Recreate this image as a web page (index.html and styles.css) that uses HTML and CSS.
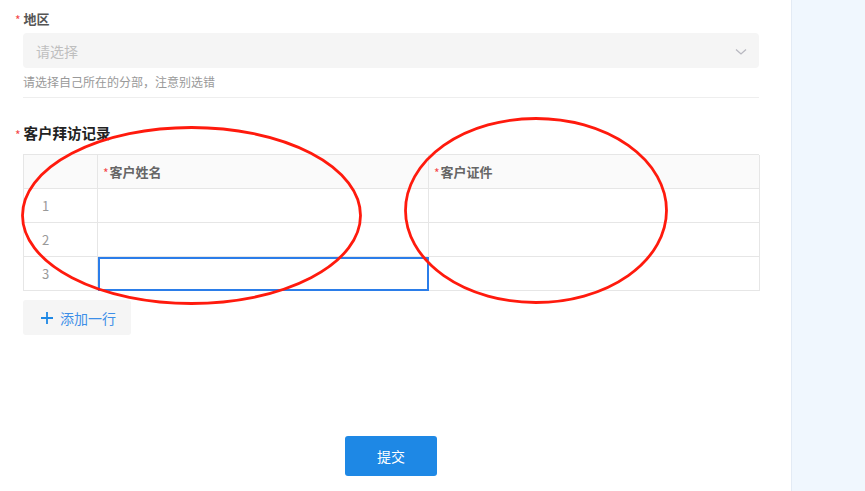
FILE: index.html
```html
<!DOCTYPE html>
<html lang="zh">
<head>
<meta charset="utf-8">
<link rel="stylesheet" href="styles.css">
</head>
<body>
<div class="page">
  <main class="main">
    <div class="field">
      <div class="label label-light"><span class="req">*</span>地区</div>
      <div class="select">
        <span class="placeholder">请选择</span>
        <svg class="chev" width="12" height="8" viewBox="0 0 12 8"><path d="M1 1.5 L6 6 L11 1.5" fill="none" stroke="#b8b8c0" stroke-width="1.3"/></svg>
      </div>
      <div class="help">请选择自己所在的分部，注意别选错</div>
    </div>
    <div class="divider"></div>
    <div class="field2">
      <div class="label label-dark"><span class="req">*</span>客户拜访记录</div>
      <div class="grid">
        <div class="cell head"></div>
        <div class="cell head"><span class="req">*</span>客户姓名</div>
        <div class="cell head"><span class="req">*</span>客户证件</div>
        <div class="cell num">1</div><div class="cell"></div><div class="cell"></div>
        <div class="cell num">2</div><div class="cell"></div><div class="cell"></div>
        <div class="cell num">3</div><div class="cell active"></div><div class="cell"></div>
      </div>
      <button class="add"><svg width="12" height="12" viewBox="0 0 12 12"><path d="M6 0 V12 M0 6 H12" stroke="#1e88e5" stroke-width="1.8"/></svg><span>添加一行</span></button>
    </div>
    <div class="actions"><button class="submit">提交</button></div>
  </main>
  <aside class="side"></aside>
  <svg class="marks" width="865" height="491" viewBox="0 0 865 491">
    <ellipse cx="191.5" cy="215.5" rx="169" ry="88" fill="none" stroke="#ff1a0d" stroke-width="2.8"/>
    <ellipse cx="536" cy="210.5" rx="130.5" ry="92" fill="none" stroke="#ff1a0d" stroke-width="2.8"/>
  </svg>
</div>
</body>
</html>
```
FILE: styles.css
```css
* { box-sizing: border-box; }
html, body { margin: 0; padding: 0; }
body {
  font-family: "Noto Sans CJK SC", "Noto Sans", sans-serif;
  background: #fff;
  width: 865px;
  height: 491px;
  overflow: hidden;
}
.page { position: relative; display: flex; height: 491px; }
.main { width: 791px; padding: 9px 32px 0 23px; }
.side { flex: 1; background: #f0f7fe; border-left: 1px solid #e3ebf5; }
.req { color: #f5484a; font-weight: normal; font-size: 12px; position: relative; left: -8px; margin-right: -5px; top: 1px; }
.label { font-weight: bold; line-height: 20px; }
.label-light { font-size: 13px; color: #555; }
.label-dark { font-size: 14.5px; color: #222; }
.select {
  margin-top: 4px;
  height: 35px;
  background: #f5f5f5;
  border-radius: 4px;
  display: flex;
  align-items: center;
  justify-content: space-between;
  padding: 0 12px 0 13px;
}
.placeholder { font-size: 14px; color: #bfbfbf; }
.chev { margin-top: 2px; }
.help { margin-top: 5px; font-size: 12px; line-height: 18px; color: #999; }
.divider { margin-top: 6px; height: 1px; background: #eeeeee; }
.field2 { margin-top: 25px; }
.grid {
  margin-top: 10px;
  display: grid;
  grid-template-columns: 74px 331px 331px;
  border-top: 1px solid #e6e6e6;
  border-left: 1px solid #e6e6e6;
}
.cell {
  height: 34px;
  border-right: 1px solid #e6e6e6;
  border-bottom: 1px solid #e6e6e6;
  font-size: 13px;
  display: flex;
  align-items: center;
}
.head { background: #fafafa; color: #666; font-weight: bold; padding-left: 5px; }
.head .req { left: 0; margin-right: 1px; }
.num { color: #999999; padding-left: 18px; font-size: 13px; }
.active { position: relative; }
.active::after {
  content: "";
  position: absolute;
  left: 0; top: 0; right: -1px; bottom: -1px;
  border: 2px solid #2b7de9;
}
.add {
  margin-top: 9px;
  width: 108px;
  height: 35px;
  background: #f5f5f5;
  border: none;
  border-radius: 3px;
  display: flex;
  align-items: center;
  padding: 0 0 0 18px;
  gap: 7px;
  font-family: inherit;
  font-size: 14px;
  color: #3d8fe8;
}
.actions { display: flex; justify-content: center; margin-top: 101px; }
.submit {
  width: 92px;
  height: 40px;
  background: #1e88e5;
  color: #fff;
  border: none;
  border-radius: 3px;
  font-family: inherit;
  font-size: 14px;
}
.marks { position: absolute; left: 0; top: 0; pointer-events: none; }
```
